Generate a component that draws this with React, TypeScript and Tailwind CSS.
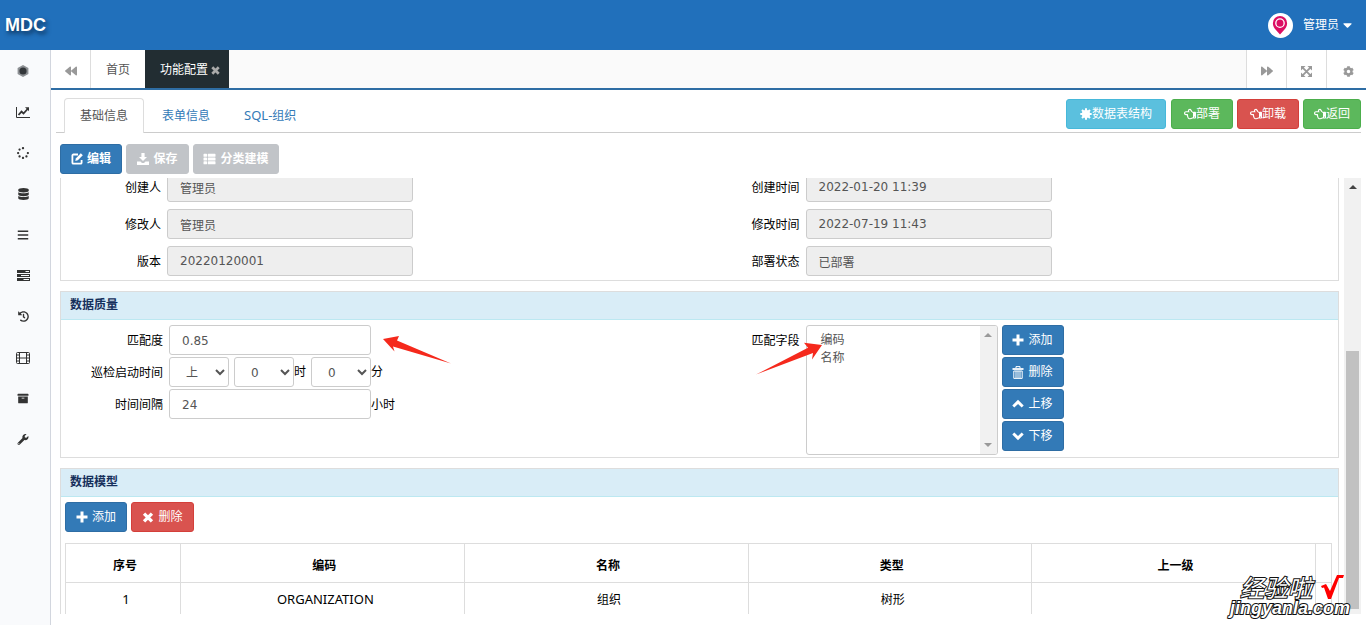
import type { ReactNode } from "react";
import clsx from "clsx";
import {
  FaArchive,
  FaBackward,
  FaBars,
  FaCaretDown,
  FaCog,
  FaDatabase,
  FaForward,
  FaHistory,
  FaRegHandPointLeft,
  FaSpinner,
  FaThList,
  FaWrench,
} from "react-icons/fa";

const BTN_COLORS = {
  primary: "bg-[#337ab7] border-[#2e6da4]",
  info: "bg-[#5bc0de] border-[#46b8da]",
  success: "bg-[#5cb85c] border-[#4cae4c]",
  danger: "bg-[#d9534f] border-[#d43f3a]",
  muted: "bg-[#c1c4c8] border-[#c1c4c8]",
};

const COLUMNS = ["序号", "编码", "名称", "类型", "上一级"];
const ROWS = [["1", "ORGANIZATION", "组织", "树形", ""]];

/* ---------- Icons ---------- */

function GemIcon() {
  return (
    <svg viewBox="0 0 12 12" className="h-3 w-3">
      <path d="M6 0l5.4 3v6L6 12 .6 9V3z" fill="#8d9094" />
      <circle cx="6" cy="6" r="3.6" fill="#33363a" />
    </svg>
  );
}

function LineChartIcon() {
  return (
    <svg viewBox="0 0 14 12" className="h-3 w-3.5" fill="none" stroke="currentColor">
      <path d="M.5 1v10.5H14" />
      <path d="M2.5 9l3-3.4 2 1.9L11.6 3" strokeWidth="1.8" />
      <path d="M9 1.2h4v4z" fill="currentColor" stroke="none" />
    </svg>
  );
}

function TasksIcon() {
  return (
    <svg viewBox="0 0 13 11" className="h-[11px] w-[13px]" fill="currentColor">
      <path d="M0 0h13v3H0zM8.5 1v1H12V1zM0 4h13v3H0zM4 5v1h8V5zM0 8h13v3H0zM6.5 9v1H12V9z" fillRule="evenodd" />
    </svg>
  );
}

function FilmIcon() {
  return (
    <svg viewBox="0 0 14 12" className="h-3 w-3.5" fill="none" stroke="currentColor">
      <rect x=".5" y=".5" width="13" height="11" rx="1" />
      <path d="M3.5 0v12M10.5 0v12M3.5 6h7M.5 3h3M.5 6h3M.5 9h3M10.5 3h3M10.5 6h3M10.5 9h3" />
    </svg>
  );
}

function FullscreenIcon() {
  return (
    <svg viewBox="0 0 12 12" className="h-[11px] w-[11px]">
      <path d="M0 0h5L0 5zM12 0v5L7 0zM0 12V7l5 5zM12 12H7l5-5z" fill="currentColor" />
      <path d="M1.5 1.5l9 9M10.5 1.5l-9 9" stroke="currentColor" strokeWidth="2" />
    </svg>
  );
}

function EditIcon() {
  return (
    <svg viewBox="0 0 12 12" className="h-3 w-3" fill="none" stroke="currentColor" strokeWidth="1.8">
      <path d="M7 1.5H2.4a1 1 0 0 0-1 1v7.2a1 1 0 0 0 1 1h7.2a1 1 0 0 0 1-1V7" />
      <path d="M4.3 7.9l.5-2.500L9.800.3l2 2-5 5z" fill="currentColor" stroke="none" />
    </svg>
  );
}

function SaveIcon() {
  return (
    <svg viewBox="0 0 12 12" className="h-3 w-3" fill="currentColor">
      <path d="M4.4 0h3.200v4H10L6 8 2 4h2.400zM0 8.500h3.500L5 10h2l1.500-1.500H12V12H0z" />
    </svg>
  );
}

function TrashIcon() {
  return (
    <svg viewBox="0 0 12 13" className="h-[13px] w-3" fill="none" stroke="currentColor">
      <path d="M4 2V.6h4V2" />
      <path d="M.5 3h11" strokeWidth="1.8" />
      <path d="M1.8 5h8.400v7.400H1.800zM4 5v7M6 5v7M8 5v7" />
    </svg>
  );
}

function PlusIcon() {
  return (
    <svg viewBox="0 0 12 12" className="h-3 w-3" fill="currentColor">
      <path d="M4.500.5h3v4h4v3h-4v4h-3v-4h-4v-3h4z" />
    </svg>
  );
}

function TimesIcon({ className }: { className?: string }) {
  return (
    <svg viewBox="0 0 12 12" className={className} fill="none" stroke="currentColor" strokeWidth="3.6">
      <path d="M1.7 1.7l8.600 8.600M10.300 1.700l-8.600 8.600" />
    </svg>
  );
}

function ChevronIcon({ up }: { up?: boolean }) {
  return (
    <svg viewBox="0 0 12 12" className="h-3 w-3" fill="none" stroke="currentColor" strokeWidth="2.9">
      <path d={up ? "M1.3 8.5L6 3.9l4.7 4.6" : "M1.3 3.5L6 8.1l4.7-4.6"} />
    </svg>
  );
}

function CertificateIcon() {
  return (
    <svg viewBox="0 0 12 12" className="h-3 w-3" fill="currentColor">
      <circle cx="6" cy="6" r="4.1" />
      <path d="M6 .3v11.400M.3 6h11.400M2 2l8 8M10 2l-8 8" stroke="currentColor" strokeWidth="2" />
    </svg>
  );
}

function PinIcon() {
  return (
    <svg viewBox="0 0 16 20" className="h-[19px] w-4">
      <path d="M8 0a7.500 7.500 0 0 1 7.500 7.500c0 3-1.500 5-3 6.900L8 19.500l-4.500-5.100C2 12.500.5 10.500.5 7.500A7.500 7.500 0 0 1 8 0z" fill="#dc0e63" />
      <circle cx="8" cy="7.500" r="4.400" fill="#dc0e63" stroke="#fff" strokeWidth="1.4" />
    </svg>
  );
}

/* ---------- Controls ---------- */

type ButtonProps = {
  color: keyof typeof BTN_COLORS;
  icon: ReactNode;
  children: ReactNode;
  tight?: boolean;
  disabled?: boolean;
  className?: string;
};

function Button({ color, icon, children, tight, disabled, className }: ButtonProps) {
  return (
    <button
      type="button"
      disabled={disabled}
      className={clsx(
        "flex h-[30px] shrink-0 items-center justify-center rounded-[3px] border text-white whitespace-nowrap",
        tight ? "gap-0" : "gap-1",
        BTN_COLORS[color],
        className
      )}
    >
      {icon}
      <span>{children}</span>
    </button>
  );
}

type FieldProps = { id: string; label: string; value: string };

function ReadonlyField({ id, label, value }: FieldProps) {
  return (
    <div className="flex items-center gap-1.5">
      <label htmlFor={id} className="w-[100px] pt-0.5 text-right">
        {label}
      </label>
      <input
        id={id}
        readOnly
        defaultValue={value}
        className="h-[30px] w-[246px] rounded-[3px] border border-[#ccc] bg-[#eee] px-3 font-['DejaVu_Sans','Noto_Sans_CJK_SC',sans-serif] text-[#555]"
      />
    </div>
  );
}

function QualityField({ id, label, value, suffix }: FieldProps & { suffix?: string }) {
  return (
    <div className="flex items-center">
      <label htmlFor={id} className="mr-1.5 w-[102px] pt-0.5 text-right">
        {label}
      </label>
      <input
        id={id}
        defaultValue={value}
        className="h-[30px] w-[202px] rounded-[3px] border border-[#ccc] bg-white px-3 pt-0.5 font-['DejaVu_Sans','Noto_Sans_CJK_SC',sans-serif] text-[#555]"
      />
      {suffix && <span className="pt-0.5">{suffix}</span>}
    </div>
  );
}

function TimeSelect({ label, value, className }: { label: string; value: string; className?: string }) {
  return (
    <select
      aria-label={label}
      defaultValue={value}
      className={clsx(
        "h-[30px] w-[60px] rounded-[3px] border border-[#ccc] bg-white px-3 pt-0.5 font-['DejaVu_Sans','Noto_Sans_CJK_SC',sans-serif] text-[#555]",
        className
      )}
    >
      <option>{value}</option>
    </select>
  );
}

function Panel({ title, children, className }: { title: string; children: ReactNode; className?: string }) {
  return (
    <section className={clsx("shrink-0 border border-[#ddd]", className)}>
      <h2 className="h-7 border-b border-[#bce8f1] bg-[#d9edf7] px-[9px] leading-[26px] font-bold text-[#16305c]">{title}</h2>
      {children}
    </section>
  );
}

/* ---------- Layout ---------- */

function Header() {
  return (
    <header className="flex h-[50px] shrink-0 items-center justify-between bg-[#2170bb] pr-3.5 pl-[5px] text-white">
      <span className="font-['Liberation_Sans',sans-serif] text-lg font-bold [text-shadow:2px_3px_4px_#0b2f55]">MDC</span>
      <button type="button" className="flex items-center">
        <span className="mr-2.5 flex h-[25px] w-[25px] items-center justify-center rounded-full bg-white">
          <PinIcon />
        </span>
        管理员
        <FaCaretDown className="ml-1 h-3.5 w-[9px]" />
      </button>
    </header>
  );
}

function Sidebar() {
  const items = [
    { label: "首页", icon: <GemIcon /> },
    { label: "统计", icon: <LineChartIcon /> },
    { label: "任务", icon: <FaSpinner className="h-3 w-3" /> },
    { label: "数据", icon: <FaDatabase className="h-3 w-[11px]" /> },
    { label: "列表", icon: <FaBars className="h-3 w-3" /> },
    { label: "进度", icon: <TasksIcon /> },
    { label: "历史", icon: <FaHistory className="h-[11px] w-[11px]" /> },
    { label: "媒体", icon: <FilmIcon /> },
    { label: "归档", icon: <FaArchive className="h-[11px] w-3" /> },
    { label: "工具", icon: <FaWrench className="h-[11px] w-3" /> },
  ];

  return (
    <nav className="w-[51px] shrink-0 border-r border-[#d2d6de] bg-[#f9fafc] text-[#333]">
      {items.map((item) => (
        <a key={item.label} href="#" aria-label={item.label} className="flex h-[41px] w-[46px] items-center justify-center">
          {item.icon}
        </a>
      ))}
    </nav>
  );
}

function PageTabs() {
  return (
    <div className="flex h-10 shrink-0 border-b-2 border-[#2e6da4] bg-[#fafafa] text-[#999]">
      <button type="button" aria-label="向左" className="flex w-10 items-center justify-center border-r border-[#ddd] bg-white pt-1">
        <FaBackward className="h-3 w-3" />
      </button>
      <a href="#" className="flex items-center bg-white px-[15px] pt-0.5 text-[#555]">
        首页
      </a>
      <a href="#" className="flex items-center gap-[3px] bg-[#222d32] pt-0.5 pr-[9px] pl-[15px] text-white">
        功能配置
        <TimesIcon className="h-[9px] w-[9px] text-[#aaa]" />
      </a>
      <div className="flex-1" />
      <button type="button" aria-label="向右" className="flex w-10 items-center justify-center border-l border-[#ddd] bg-white pt-1">
        <FaForward className="h-3 w-3" />
      </button>
      <button type="button" aria-label="全屏" className="flex w-10 items-center justify-center border-l border-[#ddd] bg-white pt-1">
        <FullscreenIcon />
      </button>
      <button type="button" aria-label="设置" className="flex w-10 items-center justify-center border-l border-[#ddd] bg-white pt-1 pl-1">
        <FaCog className="h-[11px] w-[11px]" />
      </button>
    </div>
  );
}

function FormTabs() {
  const hand = <FaRegHandPointLeft className="h-3 w-3" />;
  return (
    <div className="mr-[5px] ml-[5px] flex shrink-0 items-end justify-between border-b border-[#ccc] pt-2 pl-2">
      <div className="flex text-[#337ab7]">
        <a href="#" className="-mb-px flex h-[35px] items-center rounded-t border border-b-0 border-[#ddd] bg-white px-[15px] text-[#555]">
          基础信息
        </a>
        <a href="#" className="flex h-[34px] items-center px-[18px] pt-0.5">
          表单信息
        </a>
        <a href="#" className="flex h-[34px] items-center px-4 pt-0.5">
          <span className="text-[13px]">SQL-</span>组织
        </a>
      </div>
      <div className="mb-[3px] flex items-center gap-1">
        <Button color="info" tight icon={<CertificateIcon />} className="mr-px w-[100px]">
          数据表结构
        </Button>
        <Button color="success" tight icon={hand} className="w-[62px]">
          部署
        </Button>
        <Button color="danger" tight icon={hand} className="w-[62px]">
          卸载
        </Button>
        <Button color="success" tight icon={hand} className="w-[58px]">
          返回
        </Button>
      </div>
    </div>
  );
}

function InfoPanel() {
  return (
    <section className="-mt-[7px] grid shrink-0 grid-cols-2 gap-y-[7px] border border-[#ddd] pb-1">
      <ReadonlyField id="creator" label="创建人" value="管理员" />
      <ReadonlyField id="createdAt" label="创建时间" value="2022-01-20 11:39" />
      <ReadonlyField id="editor" label="修改人" value="管理员" />
      <ReadonlyField id="updatedAt" label="修改时间" value="2022-07-19 11:43" />
      <ReadonlyField id="version" label="版本" value="20220120001" />
      <ReadonlyField id="status" label="部署状态" value="已部署" />
    </section>
  );
}

function QualityPanel() {
  return (
    <Panel title="数据质量">
      <div className="grid grid-cols-2 pt-[5px] pb-0.5">
        <div className="relative flex flex-col gap-0.5">
          <QualityField id="match" label="匹配度" value="0.85" />
          <div className="flex items-center">
            <span className="mr-1.5 w-[102px] pt-0.5 text-right">巡检启动时间</span>
            <TimeSelect label="上下午" value="上" />
            <TimeSelect label="时" value="0" className="ml-[5px]" />
            <span className="mr-[5px]">时</span>
            <TimeSelect label="分" value="0" />
            <span>分</span>
          </div>
          <QualityField id="interval" label="时间间隔" value="24" suffix="小时" />
          <svg viewBox="0 0 70 30" className="absolute top-[10px] left-[321px] h-[30px] w-[70px]" fill="#f5291c">
            <path d="M1 4L17 1l-2 4.500L69 28.500 11 11.500l1.500 5z" />
          </svg>
        </div>

        <div className="relative flex">
          <label htmlFor="matchFields" className="mr-1.5 w-[100px] text-right leading-8">
            匹配字段
          </label>
          <div className="flex h-[130px] w-[192px] overflow-hidden rounded-[3px] border border-[#ccc] bg-white">
            <select id="matchFields" multiple className="min-w-0 flex-1 appearance-none overflow-hidden py-1 pl-3 leading-4 text-[#555]">
              <option className="px-0.5 py-0">编码</option>
              <option className="px-0.5 py-0">名称</option>
            </select>
            <div className="flex w-[17px] flex-col items-center justify-between bg-[#f1f1f1] py-[7px] text-[#999]">
              <svg viewBox="0 0 8 4" className="h-1 w-2" fill="currentColor"><path d="M4 0l4 4H0z" /></svg>
              <svg viewBox="0 0 8 4" className="h-1 w-2" fill="currentColor"><path d="M4 4L0 0h8z" /></svg>
            </div>
          </div>
          <div className="ml-1 flex flex-col gap-0.5">
            <Button color="primary" icon={<PlusIcon />} className="w-[62px]">添加</Button>
            <Button color="primary" icon={<TrashIcon />} className="w-[62px]">删除</Button>
            <Button color="primary" icon={<ChevronIcon up />} className="w-[62px]">上移</Button>
            <Button color="primary" icon={<ChevronIcon />} className="w-[62px]">下移</Button>
          </div>
          <svg viewBox="0 0 68 34" className="absolute top-[17px] left-[55px] h-[34px] w-[68px]" fill="#f5291c">
            <path d="M67 3L49 .7l4 5L1 32.500 58 11l-1 6.500z" />
          </svg>
        </div>
      </div>
    </Panel>
  );
}

function ModelPanel() {
  return (
    <Panel title="数据模型" className="pb-10">
      <div className="flex gap-1 px-1 pt-[5px]">
        <Button color="primary" icon={<PlusIcon />} className="w-[62px]">添加</Button>
        <Button color="danger" icon={<TimesIcon className="h-[11px] w-3" />} className="w-[63px]">删除</Button>
      </div>
      <div className="mt-[11px] mr-1.5 ml-1">
        <table className="w-full table-fixed border-collapse text-center text-black">
          <colgroup>
            <col className="w-[115px]" />
            <col />
            <col />
            <col />
            <col />
            <col className="w-4" />
          </colgroup>
          <thead>
            <tr className="h-[39px]">
              {COLUMNS.map((name) => (
                <th key={name} className="border border-[#ddd] pt-1.5 pl-1 font-bold">{name}</th>
              ))}
              <td className="border border-[#ddd]" />
            </tr>
          </thead>
          <tbody>
            {ROWS.map((row) => (
              <tr key={row[0]} className="h-[35px]">
                {row.map((cell, i) => (
                  <td key={i} className={clsx("border border-[#ddd] pl-1.5", i < 2 && "text-[13px]")}>{cell}</td>
                ))}
                <td className="border border-[#ddd]" />
              </tr>
            ))}
          </tbody>
        </table>
      </div>
    </Panel>
  );
}

function ScrollTrack() {
  return (
    <div className="flex w-[17px] shrink-0 flex-col items-center bg-[#f1f1f1] pt-[7px] pb-[5px]">
      <svg viewBox="0 0 8 4" className="h-1 w-2" fill="#444"><path d="M4 0l4 4H0z" /></svg>
      <div className="flex-[162]" />
      <div className="w-[13px] flex-[258] bg-[#c1c1c1]" />
    </div>
  );
}

function Watermark() {
  return (
    <div className="absolute right-4 bottom-2 flex flex-col items-end text-white italic [-webkit-text-stroke:2px_#111] [paint-order:stroke_fill]">
      <div className="mr-1.5 flex items-center gap-2">
        <span className="font-['Noto_Sans_CJK_SC',sans-serif] text-2xl leading-6">经验啦</span>
        <svg viewBox="0 0 24 24" className="h-6 w-6" fill="#f00" stroke="none">
          <path d="M1 11l5-2 4 7L17 0h7l-1 3h-4L11 24H8L4 12.500 2 13z" />
        </svg>
      </div>
      <span className="font-['Liberation_Sans',sans-serif] text-lg leading-[18px] font-bold">jingyanla.com</span>
    </div>
  );
}

export default function App() {
  return (
    <div className="relative flex h-screen flex-col overflow-hidden bg-white font-['Noto_Sans','Noto_Sans_CJK_SC',sans-serif] text-xs text-black">
      <Header />
      <div className="flex min-h-0 flex-1">
        <Sidebar />
        <main className="flex min-w-0 flex-1 flex-col">
          <PageTabs />
          <FormTabs />
          <div className="flex shrink-0 gap-1 px-[9px] pt-[11px] pb-1">
            <Button color="primary" icon={<EditIcon />} className="w-[62px] font-bold">编辑</Button>
            <Button color="muted" disabled icon={<SaveIcon />} className="w-[63px] font-bold">保存</Button>
            <Button color="muted" disabled icon={<FaThList className="h-3 w-[13px]" />} className="w-[86px] font-bold">分类建模</Button>
          </div>
          <div className="mr-[5px] mb-[11px] ml-[9px] flex min-h-0 flex-1 gap-[5px] overflow-hidden">
            <div className="flex min-w-0 flex-1 flex-col gap-2.5 overflow-hidden">
              <InfoPanel />
              <QualityPanel />
              <ModelPanel />
            </div>
            <ScrollTrack />
          </div>
        </main>
      </div>
      <Watermark />
    </div>
  );
}
